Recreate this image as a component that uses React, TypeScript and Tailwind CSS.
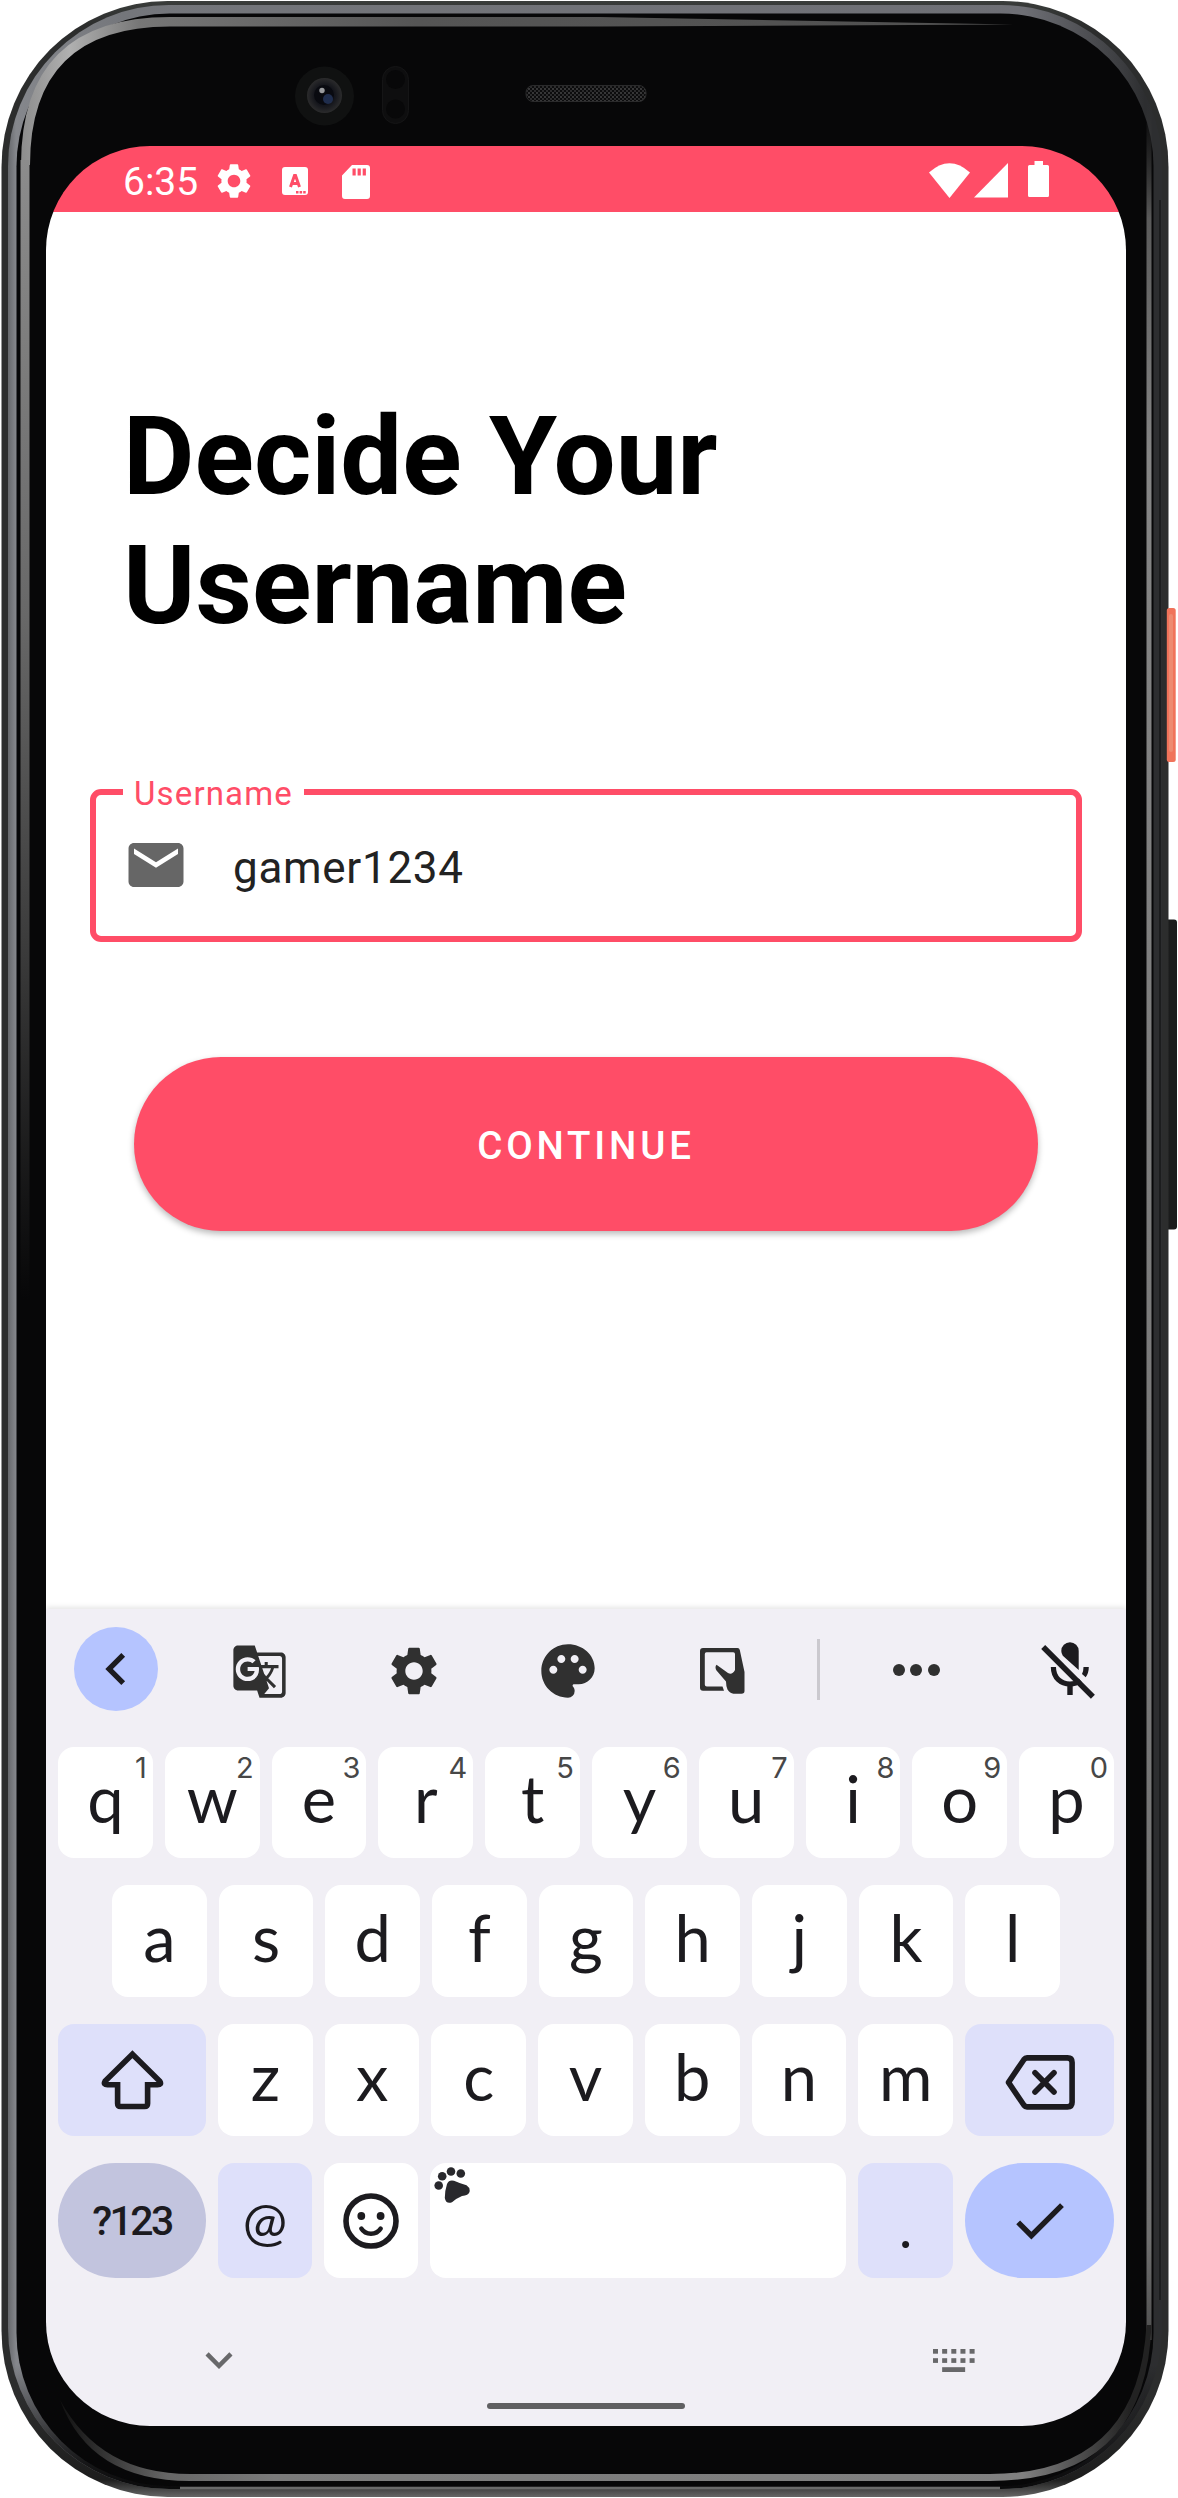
import React from "react";
import {
  MdCheck,
  MdExpandMore,
  MdGTranslate,
  MdMail,
  MdNavigateBefore,
  MdPalette,
  MdSettings,
} from "react-icons/md";

function DeviceFrame() {
  return (
    <svg className="absolute inset-0" width="1178" height="2498" viewBox="0 0 1178 2498" fill="none">
      <defs>
        <linearGradient id="rim" x1="0" y1="0" x2="1" y2="0">
          <stop offset="0" stopColor="#66686c" />
          <stop offset="0.007" stopColor="#85878c" />
          <stop offset="0.1" stopColor="#74767b" />
          <stop offset="0.88" stopColor="#6e6f75" />
          <stop offset="0.965" stopColor="#3c3d40" />
          <stop offset="0.985" stopColor="#2d2e30" />
          <stop offset="1" stopColor="#2d2e30" />
        </linearGradient>
        <linearGradient id="rimFoot" x1="0" y1="0" x2="0" y2="1">
          <stop offset="0.95" stopColor="#0a0a0b" stopOpacity="0" />
          <stop offset="0.99" stopColor="#0a0a0b" stopOpacity="0.9" />
          <stop offset="1" stopColor="#0a0a0b" />
        </linearGradient>
        <linearGradient id="shell" x1="0" y1="0" x2="0" y2="1">
          <stop offset="0" stopColor="#3a3d3b" />
          <stop offset="0.01" stopColor="#2c2d2d" />
          <stop offset="0.96" stopColor="#2c2d2d" />
          <stop offset="0.993" stopColor="#1d1d1d" />
          <stop offset="1" stopColor="#666" />
        </linearGradient>
        <linearGradient id="glintTop" gradientUnits="userSpaceOnUse" x1="20" y1="0" x2="1013" y2="0">
          <stop offset="0" stopColor="#8c8c8c" />
          <stop offset="0.05" stopColor="#b0b0b0" />
          <stop offset="0.12" stopColor="#777" />
          <stop offset="0.4" stopColor="#555" />
          <stop offset="1" stopColor="#505050" />
        </linearGradient>
        <linearGradient id="glintLeft" gradientUnits="userSpaceOnUse" x1="0" y1="160" x2="0" y2="1300">
          <stop offset="0" stopColor="#8c8c8c" />
          <stop offset="0.4" stopColor="#686868" />
          <stop offset="0.7" stopColor="#3a3a3a" />
          <stop offset="1" stopColor="#333" stopOpacity="0" />
        </linearGradient>
        <linearGradient id="glintRight" gradientUnits="userSpaceOnUse" x1="0" y1="100" x2="0" y2="2474">
          <stop offset="0" stopColor="#333" stopOpacity="0" />
          <stop offset="0.05" stopColor="#5a5a5a" />
          <stop offset="0.15" stopColor="#858585" />
          <stop offset="0.9" stopColor="#707070" />
          <stop offset="1" stopColor="#222" />
        </linearGradient>
        <linearGradient id="glintFoot" gradientUnits="userSpaceOnUse" x1="60" y1="0" x2="1130" y2="0">
          <stop offset="0" stopColor="#111" />
          <stop offset="0.1" stopColor="#666" />
          <stop offset="0.2" stopColor="#7a7a7a" />
          <stop offset="0.9" stopColor="#808080" />
          <stop offset="1" stopColor="#222" />
        </linearGradient>
        <pattern id="mesh" width="4" height="4" patternUnits="userSpaceOnUse">
          <rect width="4" height="4" fill="#0c0c0d" />
          <circle cx="1" cy="1" r="0.9" fill="#4a4a4b" />
          <circle cx="3" cy="3" r="0.9" fill="#3a3a3b" />
        </pattern>
        <radialGradient id="lens" cx="0.5" cy="0.5" r="0.5">
          <stop offset="0" stopColor="#0b0d14" />
          <stop offset="0.6" stopColor="#15161c" />
          <stop offset="1" stopColor="#2b2b2c" />
        </radialGradient>
      </defs>
      <rect x="1163" y="919.5" width="14" height="310" rx="3" fill="#1b1c1c" />
      <rect x="1.5" y="1" width="1167" height="2496" rx="166" fill="url(#shell)" />
      <rect x="1166.800" y="608" width="8.900" height="154" rx="2.500" fill="#f0735a" />
      <rect x="1169" y="614" width="4" height="138" rx="2" fill="#ee8a70" />
      <rect x="8" y="5" width="1154" height="2484" rx="161" fill="url(#rim)" />
      <rect x="8" y="5" width="1154" height="2484" rx="161" fill="url(#rimFoot)" />
      <path d="M180 2488H1000" stroke="#6a6a6a" strokeWidth="2.5" />
      <rect x="16.5" y="13.5" width="1137" height="2472.5" rx="153" fill="#070708" />
      <path d="M1160 200V2300" stroke="#1c1d1e" strokeWidth="2" />
      <path
        d="M21 165 Q21 17 170 17 H600 L1013 24.5 L600 26.5 H170 Q30 26.5 30 165 Z"
        fill="url(#glintTop)"
      />
      <rect x="20.5" y="160" width="9" height="1140" fill="url(#glintLeft)" />
      <rect x="1146.5" y="100" width="5" height="2240" fill="url(#glintRight)" />
      <path
        d="M60 2400 Q90 2481 190 2481 H990 Q1146 2481 1151.5 2325 H1146.500 Q1138 2474 990 2474 H190 Q100 2474 60 2400Z"
        fill="url(#glintFoot)"
      />
      <circle cx="324.500" cy="96" r="29.500" fill="#101111" />
      <circle cx="324.500" cy="95.500" r="17.500" fill="url(#lens)" />
      <circle cx="324" cy="95" r="10" fill="#090a10" />
      <circle cx="328" cy="99" r="5" fill="#26365c" opacity="0.8" />
      <circle cx="322" cy="90.500" r="2.700" fill="#9a9b9e" />
      <rect x="382.500" y="66.500" width="26" height="57" rx="13" fill="#0e0e0f" stroke="#151516" />
      <circle cx="395.500" cy="79.500" r="9.500" fill="#080809" />
      <circle cx="395.500" cy="109" r="9.500" fill="#080809" />
      <rect x="526" y="85.500" width="120" height="16" rx="7" fill="url(#mesh)" stroke="#2a2a2b" />
    </svg>
  );
}

function StatusBar() {
  return (
    <div className="flex h-[66px] items-center bg-[#ff4d67] pl-[77px] pr-[77px] text-white">
      <span className="relative top-[3px] w-[88px] text-[39px] leading-none">6:35</span>
      <MdSettings className="ml-[2px] mt-[4px] size-[42px] shrink-0" />
      <svg className="ml-[27px] mt-[4px] shrink-0" width="26" height="28" viewBox="0 0 26 28">
        <rect width="26" height="28" rx="3" fill="#fff" />
        <path
          d="M8.500 20 L12.500 8.500 H13.500 L17.500 20 M9.800 16.500 H16.200"
          stroke="#ff4d67"
          strokeWidth="3"
          fill="none"
        />
        <path d="M14 24h2.500v2.500H14zM17.600 24h2.500v2.500h-2.500zM21.200 24h2.500v2.500h-2.500z" fill="#ff4d67" />
      </svg>
      <svg className="ml-[34px] mt-[5px] shrink-0" width="28" height="34" viewBox="0 0 28 34">
        <path
          fill="#fff"
          fillRule="evenodd"
          d="M10 0H25a3 3 0 0 1 3 3V31a3 3 0 0 1-3 3H3a3 3 0 0 1-3-3V10.500zM10.500 3.500V10.500H13.700V3.500zM15.600 3.500V10.500H18.800V3.500zM20.700 3.500V10.500H23.900V3.500z"
        />
      </svg>
      <div className="ml-auto flex items-start">
        <svg className="mt-[2px]" width="41" height="35" viewBox="0 0 41 35">
          <path fill="#fff" d="M0 9.500Q20.500-9 41 9.500L20.500 35z" />
        </svg>
        <svg className="ml-[4px] mt-[2px]" width="34" height="35" viewBox="0 0 34 35">
          <path fill="#fff" d="M34 0V34.500H0z" />
        </svg>
        <svg className="ml-[20px]" width="21" height="36" viewBox="0 0 21 36">
          <path
            fill="#fff"
            d="M6.500 0H15V4H19.500a1.500 1.500 0 0 1 1.500 1.500V34.500a1.500 1.500 0 0 1-1.500 1.500H1.500A1.500 1.500 0 0 1 0 34.500V5.500A1.500 1.500 0 0 1 1.500 4H6.500z"
          />
        </svg>
      </div>
    </div>
  );
}

function UsernameForm() {
  return (
    <main className="h-[1397px] bg-white">
      <h1 className="pl-[77px] pt-[180px] text-[110px] font-bold leading-[129px] text-black">
        Decide Your
        <br />
        Username
      </h1>
      <div className="relative ml-[44px] mt-[139px] flex h-[153px] w-[992px] items-center rounded-[11px] border-[6px] border-[#ff4d67] pl-[27px]">
        <span className="absolute left-[27px] top-[-19px] flex h-[36px] w-[181px] justify-center bg-white text-[33px] leading-[36px] tracking-[1.15px] text-[#ff4d67]">
          Username
        </span>
        <MdMail className="relative top-[-1px] size-[66px] text-[#666]" />
        <span className="ml-[44px] mt-[4px] text-[44px] leading-none tracking-[0.7px] text-[#222]">
          gamer1234
        </span>
      </div>
      <button className="ml-[88px] mt-[115px] flex h-[174px] w-[904px] items-center justify-center rounded-full bg-[#ff4d67] pt-[4px] text-[38.5px] font-medium tracking-[3.8px] text-white shadow-[0_3px_6px_rgba(0,0,0,0.28)]">
        CONTINUE
      </button>
    </main>
  );
}

function StylusIcon() {
  return (
    <svg width="45" height="46" viewBox="0 0 45 46" fill="#303030">
      <path
        fillRule="evenodd"
        d="M3 0H37.500Q39.400 0 39.800 2L44.500 24V43Q44.500 45.700 41.500 45.700H33.500Q30 45.500 27.500 41.500Q26 38 26 33.500L16.500 22.500Q14.500 19 16.500 16.700L28 25Q32 27.500 35 22V6Q35 4.300 33.200 4.300H6.500Q4.800 4.300 4.800 6V36.500Q4.800 38.600 6.800 38.600H22.500L24 42.800H3Q0 42.800 0 39.800V3Q0 0 3 0z"
      />
    </svg>
  );
}

function MicOffIcon() {
  return (
    <svg width="56" height="58" viewBox="0 0 56 58" fill="none">
      <path d="M21.300 9a8.700 8.700 0 0 1 17.400 0V28L22.800 13.800Q21.300 11.500 21.300 9z" fill="#1c1b1f" />
      <path d="M3.200 5L52.900 54.700" stroke="#1c1b1f" strokeWidth="5.600" />
      <path d="M13.400 25C13.400 36 21 42 30 42C34.500 42 38 40.500 40.500 38.500" stroke="#1c1b1f" strokeWidth="5.200" />
      <path d="M27.300 42H32.700V53H27.300zM43.500 25H48.800Q48.800 31 45.700 35.300L42 32Q43.500 29 43.500 25z" fill="#1c1b1f" />
    </svg>
  );
}

function Toolbar() {
  return (
    <div className="flex h-[138px] items-start pl-[28px] pt-[18px] text-[#303030]">
      <div className="mr-[24px] flex size-[84px] shrink-0 items-center justify-center rounded-full bg-[#b5c4ff] text-[#1c1b1f]">
        <MdNavigateBefore className="size-[64px]" />
      </div>
      <div className="flex h-[88px] w-[618px] shrink-0 items-center">
        <div className="flex flex-1 justify-center">
          <MdGTranslate className="size-[57px]" />
        </div>
        <div className="flex flex-1 justify-center">
          <MdSettings className="size-[58px]" />
        </div>
        <div className="flex flex-1 justify-center">
          <MdPalette className="size-[64px]" />
        </div>
        <div className="flex flex-1 justify-center">
          <StylusIcon />
        </div>
      </div>
      <div className="ml-[17px] mt-[12px] h-[61px] w-[3px] shrink-0 bg-[#cbc9cf]" />
      <div className="flex h-[86px] w-[192px] shrink-0 items-center justify-center gap-[5.500px]">
        <i className="size-[12px] rounded-full bg-[#303030]" />
        <i className="size-[12px] rounded-full bg-[#303030]" />
        <i className="size-[12px] rounded-full bg-[#303030]" />
      </div>
      <div className="flex h-[88px] w-[112px] shrink-0 items-center justify-center">
        <MicOffIcon />
      </div>
    </div>
  );
}

function Key({ label, hint }: { label: string; hint?: string }) {
  return (
    <div className="relative flex min-w-0 flex-1 items-center justify-center rounded-[16px] bg-white font-[Lato] text-[65px] leading-[112px] text-[#1c1b1f]">
      <span className="-mt-[9px]">{label}</span>
      {hint && (
        <span className="absolute right-[6px] top-[5px] font-[Inter] text-[29px] leading-[31px] text-[#474747]">
          {hint}
        </span>
      )}
    </div>
  );
}

function ShiftIcon() {
  return (
    <svg width="63" height="60" viewBox="0 0 63 60" fill="none" stroke="#1c1b1f" strokeWidth="5.600">
      <path d="M31.400 4.300L4 31.300Q2 34.700 6.500 34.700H16.600V53.500Q16.600 56.500 19.600 56.500H43.600Q46.600 56.500 46.600 53.500V34.700H56.500Q61 34.700 58.800 31.300z" />
    </svg>
  );
}

function BackspaceIcon() {
  return (
    <svg width="70" height="55" viewBox="0 0 70 55" fill="none" stroke="#1c1b1f" strokeWidth="5.600">
      <path
        d="M3.500 27.400L19 4.500Q20.200 2.900 22 2.900H62.500Q67.100 2.900 67.100 7.500V47.300Q67.100 51.900 62.500 51.900H22Q20.200 51.900 19 50.300z"
        strokeLinejoin="round"
      />
      <path d="M30 17.800L49 37M49 17.800L30 37" strokeLinecap="round" />
    </svg>
  );
}

function SmileIcon() {
  return (
    <svg width="56" height="56" viewBox="0 0 56 56" fill="none" stroke="#1c1b1f">
      <circle cx="28" cy="28" r="25" strokeWidth="5.600" />
      <circle cx="18.300" cy="23" r="3.900" fill="#1c1b1f" stroke="none" />
      <circle cx="37.600" cy="23" r="3.900" fill="#1c1b1f" stroke="none" />
      <path d="M18.300 35.500Q21.500 40.700 28 40.700T37.700 35.500" strokeWidth="4.400" strokeLinecap="round" />
    </svg>
  );
}

function PawIcon() {
  return (
    <svg className="absolute left-[4px] top-[4px]" width="37" height="37" viewBox="0 0 37 37" fill="#28282c">
      <circle cx="4.700" cy="18.500" r="4.300" />
      <circle cx="8.200" cy="9.200" r="4.300" />
      <circle cx="17" cy="4.500" r="4.300" />
      <circle cx="26.800" cy="6.500" r="4.300" />
      <path d="M13 17Q15 12.500 20 13.800Q26 16.500 32.500 18.300Q36.500 21 35.500 25Q34.500 28.500 28 29Q23 31 18 35.300Q12 37.500 10.800 31Q11 23 13 17z" />
    </svg>
  );
}

function KeyboardIcon() {
  return (
    <svg width="42" height="23" viewBox="0 0 42 23" fill="#68686a">
      {[0, 1, 2, 3, 4].map((i) => (
        <g key={i}>
          <rect x={i * 9.15} y="0" width="5" height="4.700" />
          <rect x={i * 9.15} y="9.200" width="5" height="4.700" />
        </g>
      ))}
      <rect x="9.150" y="18.200" width="23" height="4.800" />
    </svg>
  );
}

function Keyboard() {
  return (
    <section className="relative flex h-[817px] flex-col bg-[#f1eff5] shadow-[0_-2px_5px_rgba(0,0,0,0.1)]">
      <Toolbar />
      <div className="flex h-[111px] gap-3 px-3">
        {"qwertyuiop".split("").map((c, i) => (
          <Key key={c} label={c} hint={String((i + 1) % 10)} />
        ))}
      </div>
      <div className="mt-[27px] flex h-[112px] gap-3 px-[66px]">
        {"asdfghjkl".split("").map((c) => (
          <Key key={c} label={c} />
        ))}
      </div>
      <div className="mt-[27px] flex h-[112px] gap-3 px-3">
        <div className="flex w-[148px] shrink-0 items-center justify-center rounded-[16px] bg-[#dee0fa]">
          <ShiftIcon />
        </div>
        {"zxcvbnm".split("").map((c) => (
          <Key key={c} label={c} />
        ))}
        <div className="flex w-[149px] shrink-0 items-center justify-center rounded-[16px] bg-[#dee0fa] pt-[5px]">
          <BackspaceIcon />
        </div>
      </div>
      <div className="mt-[27px] flex h-[115px] gap-3 px-3 text-[#1c1b1f]">
        <div className="flex w-[148px] shrink-0 items-center justify-center rounded-full bg-[#c2c4de] pt-[3px] text-[41px] font-medium tracking-[-2.6px]">
          ?123
        </div>
        <div className="flex w-[94px] shrink-0 items-center justify-center rounded-[16px] bg-[#dee0fa] font-[Lato] text-[53px]">
          @
        </div>
        <div className="flex w-[94px] shrink-0 items-center justify-center rounded-[16px] bg-white">
          <SmileIcon />
        </div>
        <div className="relative flex-1 rounded-[16px] bg-white">
          <PawIcon />
        </div>
        <div className="flex w-[95px] shrink-0 items-center justify-center rounded-[16px] bg-[#dee0fa] pt-[13px] font-[Lato] text-[56px] leading-none">
          .
        </div>
        <div className="flex w-[149px] shrink-0 items-center justify-center rounded-full bg-[#b5c4ff]">
          <MdCheck className="size-[65px]" />
        </div>
      </div>
      <div className="mt-[55px] flex h-[54px] items-center justify-between pl-[146px] pr-[151px]">
        <MdExpandMore className="size-[54px] text-[#68686a]" />
        <KeyboardIcon />
      </div>
      <div className="mx-auto mt-[16px] h-[6px] w-[198px] rounded-full bg-[#606062]" />
    </section>
  );
}

export default function App() {
  return (
    <div className="relative h-[2498px] w-[1178px] overflow-hidden bg-white pl-[46px] pt-[146px] font-[Roboto]">
      <DeviceFrame />
      <div className="relative h-[2280px] w-[1080px] overflow-hidden rounded-[104px]">
        <StatusBar />
        <UsernameForm />
        <Keyboard />
      </div>
    </div>
  );
}
